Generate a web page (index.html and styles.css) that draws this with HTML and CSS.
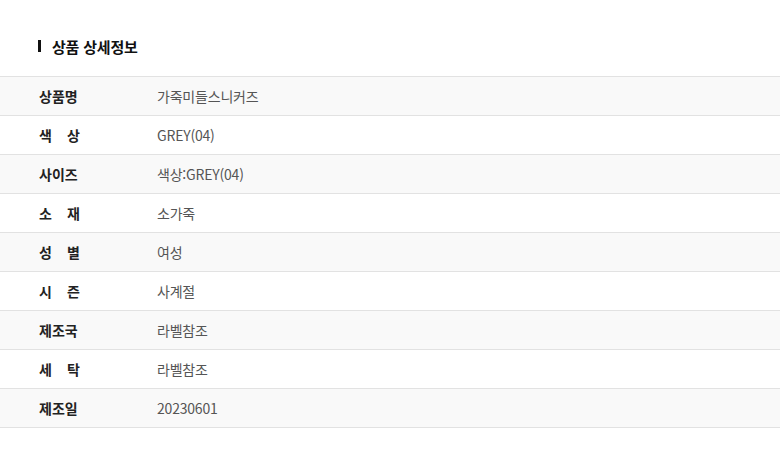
FILE: index.html
```html
<!DOCTYPE html>
<html lang="ko">
<head>
<meta charset="utf-8">
<link rel="stylesheet" href="styles.css">
</head>
<body>
<section class="detail">
  <h2 class="title"><span class="bar"></span>상품 상세정보</h2>
  <dl class="info">
    <div class="row"><dt class="lbl">상품명</dt><dd class="val">가죽미들스니커즈</dd></div>
    <div class="row"><dt class="lbl sp">색 상</dt><dd class="val">GREY(04)</dd></div>
    <div class="row"><dt class="lbl">사이즈</dt><dd class="val">색상:GREY(04)</dd></div>
    <div class="row"><dt class="lbl sp">소 재</dt><dd class="val">소가죽</dd></div>
    <div class="row"><dt class="lbl sp">성 별</dt><dd class="val">여성</dd></div>
    <div class="row"><dt class="lbl sp">시 즌</dt><dd class="val">사계절</dd></div>
    <div class="row"><dt class="lbl">제조국</dt><dd class="val">라벨참조</dd></div>
    <div class="row"><dt class="lbl sp">세 탁</dt><dd class="val">라벨참조</dd></div>
    <div class="row"><dt class="lbl">제조일</dt><dd class="val">20230601</dd></div>
  </dl>
</section>
</body>
</html>
```

FILE: styles.css
```css
html, body {
  margin: 0;
  padding: 0;
  background: #fff;
}
body {
  font-family: "Noto Sans CJK KR", "Noto Sans", sans-serif;
  color: #222;
}
.detail {
  padding-top: 35px;
}
.title {
  display: flex;
  align-items: center;
  margin: 0 0 19px 38px;
  height: 22px;
  font-size: 15px;
  font-weight: 700;
  color: #111;
  letter-spacing: -0.2px;
}
.bar {
  width: 3px;
  height: 12px;
  background: #111;
  margin-right: 11px;
}
.info {
  margin: 0;
  border-top: 1px solid #e2e2e2;
}
.row {
  display: grid;
  grid-template-columns: 118px 1fr;
  align-items: center;
  height: 38px;
  padding-left: 39px;
  border-bottom: 1px solid #e2e2e2;
}
.row:nth-child(odd) {
  background: #f9f9f9;
}
.lbl {
  width: 41px;
  font-size: 14px;
  font-weight: 700;
  color: #222;
}
.lbl.sp {
  text-align: justify;
  text-align-last: justify;
}
.val {
  margin: 0;
  font-size: 14px;
  color: #555;
  letter-spacing: -0.2px;
}
```
